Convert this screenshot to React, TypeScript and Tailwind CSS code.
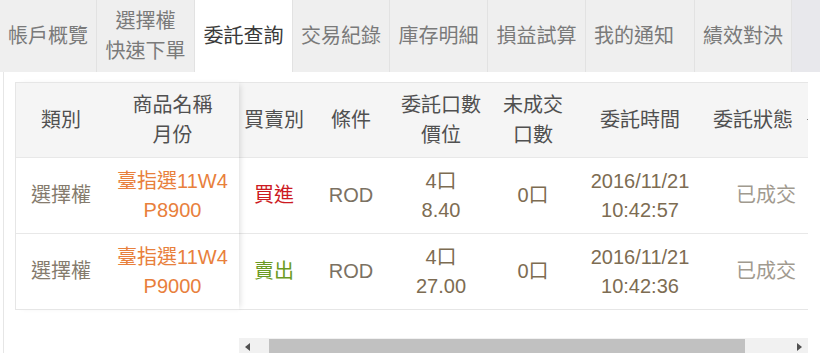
import React from 'react';

// Order query page: tab bar + table with fixed left columns

type Tab = { lines: string[]; width: string; active?: boolean; extra?: string };

const tabs: Tab[] = [
  { lines: ['帳戶概覽'], width: 'w-[97px]' },
  { lines: ['選擇權', '快速下單'], width: 'w-[98px]' },
  { lines: ['委託查詢'], width: 'w-[98px]', active: true },
  { lines: ['交易紀錄'], width: 'w-[97px]' },
  { lines: ['庫存明細'], width: 'w-[98px]' },
  { lines: ['損益試算'], width: 'w-[98px]' },
  { lines: ['我的通知'], width: 'w-[109px]', extra: 'pr-[12px]' },
  { lines: ['績效對決'], width: 'w-[97px]' },
];

const orders = [
  {
    type: '選擇權',
    product: '臺指選11W4',
    month: 'P8900',
    side: '買進',
    sideColor: 'text-[#cc1a22]',
    cond: 'ROD',
    qty: '4口',
    price: '8.40',
    left: '0口',
    date: '2016/11/21',
    time: '10:42:57',
    status: '已成交',
  },
  {
    type: '選擇權',
    product: '臺指選11W4',
    month: 'P9000',
    side: '賣出',
    sideColor: 'text-[#6b9a21]',
    cond: 'ROD',
    qty: '4口',
    price: '27.00',
    left: '0口',
    date: '2016/11/21',
    time: '10:42:36',
    status: '已成交',
  },
];

const headCell = 'flex items-center justify-center text-center leading-[30px] text-[#505050] shrink-0';
const bodyCell = 'flex items-center justify-center text-center leading-[29px] shrink-0';

const App: React.FC = () => {
  return (
    <div className="w-[820px] h-[353px] overflow-hidden bg-white font-['Liberation_Sans','Noto_Sans_CJK_TC',sans-serif] text-[20px]">
      {/* Tabs */}
      <div className="flex h-[72px] bg-[#e8e8ec]">
        {tabs.map((tab) => (
          <div
            key={tab.lines.join('')}
            className={`${tab.width} ${tab.extra ?? ''} flex flex-col items-center justify-center leading-[30px] border-r border-[#e2e2e2] ${
              tab.active ? 'bg-white text-[#3a3a3a]' : 'bg-[#efefef] text-[#7a7a7a]'
            }`}
          >
            {tab.lines.map((l) => (
              <span key={l}>{l}</span>
            ))}
          </div>
        ))}
      </div>

      {/* Content */}
      <div className="ml-[3px] border-l border-[#e6e6e6] h-[281px] pt-[10px]">
        <div className="ml-[11px] w-[793px] flex items-start">
          {/* Fixed columns */}
          <div className="w-[224px] shrink-0 border-l border-t border-b border-[#e6e6e6] bg-white relative z-10 shadow-[4px_0_6px_-3px_rgba(0,0,0,0.14)]">
            <div className="flex h-[74px] bg-[#f5f5f5]">
              <div className={`${headCell} w-[90px]`}>類別</div>
              <div className={`${headCell} w-[133px] flex-col`}>
                <span>商品名稱</span>
                <span>月份</span>
              </div>
            </div>
            {orders.map((o, i) => (
              <div key={i} className="flex h-[76px] border-t border-[#e8e8e8]">
                <div className={`${bodyCell} w-[90px] text-[#857b6d]`}>{o.type}</div>
                <div className={`${bodyCell} w-[133px] flex-col text-[#e8803c]`}>
                  <span>{o.product}</span>
                  <span>{o.month}</span>
                </div>
              </div>
            ))}
          </div>

          {/* Scrolling columns */}
          <div className="flex-1 min-w-0 flex flex-col">
            <div className="overflow-hidden border-t border-b border-[#e6e6e6]">
              <div className="w-[700px]">
                <div className="flex h-[74px] bg-[#f5f5f5]">
                  <div className={`${headCell} w-[70px]`}>買賣別</div>
                  <div className={`${headCell} w-[84px]`}>條件</div>
                  <div className={`${headCell} w-[96px] flex-col`}>
                    <span>委託口數</span>
                    <span>價位</span>
                  </div>
                  <div className={`${headCell} w-[88px] flex-col`}>
                    <span>未成交</span>
                    <span>口數</span>
                  </div>
                  <div className={`${headCell} w-[126px]`}>委託時間</div>
                  <div className={`${headCell} w-[100px]`}>委託狀態</div>
                  <div className={`${headCell} w-[90px] justify-start pl-[4px]`}>
                    <span className="block w-[3px] h-[1px] bg-[#8a8a8a] -mt-[2px]" />
                  </div>
                </div>
                {orders.map((o, i) => (
                  <div key={i} className="flex h-[76px] border-t border-[#e8e8e8] text-[#7d6c52]">
                    <div className={`${bodyCell} w-[70px] ${o.sideColor}`}>{o.side}</div>
                    <div className={`${bodyCell} w-[84px] text-[#7b7162]`}>{o.cond}</div>
                    <div className={`${bodyCell} w-[96px] flex-col`}>
                      <span>{o.qty}</span>
                      <span>{o.price}</span>
                    </div>
                    <div className={`${bodyCell} w-[88px]`}>{o.left}</div>
                    <div className={`${bodyCell} w-[126px] flex-col`}>
                      <span>{o.date}</span>
                      <span>{o.time}</span>
                    </div>
                    <div className={`${bodyCell} w-[100px] pl-[26px] text-[#a19a8f]`}>{o.status}</div>
                    <div className={`${bodyCell} w-[90px]`} />
                  </div>
                ))}
              </div>
            </div>

            {/* Horizontal scrollbar */}
            <div className="mt-[28px] h-[17px] flex bg-[#f1f1f1]">
              <div className="w-[17px] flex items-center justify-center">
                <svg width="5" height="8" viewBox="0 0 5 8">
                  <path d="M5 0 L0 4 L5 8 Z" fill="#505050" />
                </svg>
              </div>
              <div className="flex-1 flex items-center pl-[13px] pr-[46px]">
                <div className="h-[15px] w-full bg-[#c1c1c1]" />
              </div>
              <div className="w-[17px] flex items-center justify-center">
                <svg width="5" height="8" viewBox="0 0 5 8">
                  <path d="M0 0 L5 4 L0 8 Z" fill="#505050" />
                </svg>
              </div>
            </div>
          </div>
        </div>
      </div>
    </div>
  );
};

export default App;
